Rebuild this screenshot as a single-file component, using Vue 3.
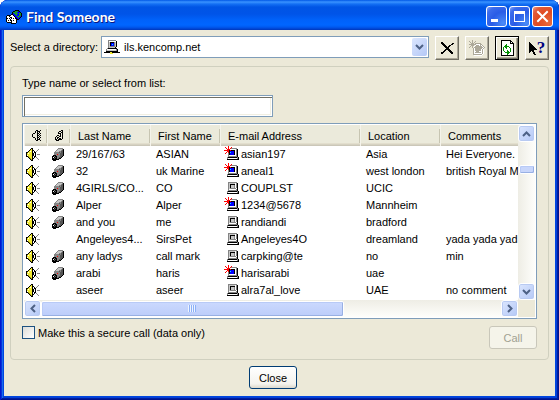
<script setup>
import { ref, h } from 'vue'

const palette = {
  k: '#000000', d: '#555555', g: '#848484', l: '#c6c6c6', w: '#ffffff',
  y: '#f0e830', o: '#a09a10', b: '#0000ff', n: '#000080', c: '#00e8ff',
  r: '#ff0000', e: '#18982c', t: '#e4e0d0', s: '#aca899', i: '#009000'
}

const sprites = {
  speaker: [
    '.....kk.......',
    '....kyk.....g.',
    '...kyykk...g..',
    '..kywykwk.g...',
    'kkyyyykwkk....',
    'kywyyykkwk....',
    'kyyyyykkwk.ggg',
    'kwyyyykkwk....',
    'kkoyyykwkk....',
    '..koyykwk.g...',
    '...koykk...g..',
    '....kok.....g.',
    '.....kk.......'
  ],
  camera: [
    '......ggggg.',
    '.....gllllgk',
    '....gllllgdk',
    '...glllggddk',
    '..gggggdgddk',
    '..ggggggdddk',
    '..gggrggdddk',
    '.kkkggggdddk',
    'kkgkkgggddk.',
    'kwkdkggddk..',
    'kkdkkgdkk...',
    'kkkkkkk.....',
    '.kkk........'
  ],
  speakerLine: [
    '....kk..k',
    '...k.kkk.',
    '...k.k.k.',
    '.kk..kk.k',
    'k....k.k.',
    'k....kk.k',
    'k....k.k.',
    '.kk..kk.k',
    '...k.k.k.',
    '...k.kkk.',
    '....kk..k'
  ],
  cameraLine: [
    '......kk',
    '....kk.k',
    '...k..kk',
    '...kkk.k',
    '.....k.k',
    '..kk.k.k',
    '.k..kk.k',
    'k.kk...k',
    'k.k.kk.k',
    'kk.kkkk.',
    '.kkk....'
  ],
  live: [
    '....r..........',
    '.r..r..r.......',
    '..r.r.rgggggg..',
    '...rrrwwwwwwgk.',
    'rrrrrkrkkkkwgk.',
    '...rrkbbbbkwgk.',
    '..r.rkcbbbkwgk.',
    '.r..gkbbbbkwgk.',
    '....gkbbbbkwgk.',
    '....gwwwwwwwgk.',
    '....gggggggggk.',
    '...gkkkkkkkkkgk',
    '...gwwwwwwwwwgk',
    '...kkkkkkkkkkkk'
  ],
  idle: [
    '...............',
    '...............',
    '....ggggggggg..',
    '....gllllllwgk.',
    '....glkkkkkwgk.',
    '....glklllgwgk.',
    '....glklllgwgk.',
    '....glklllgwgk.',
    '....glggggggwk.',
    '....gwwwwwwwgk.',
    '....gggggggggk.',
    '...gkkkkkkkkkgk',
    '...gwwwwwwwwwgk',
    '...kkkkkkkkkkkk'
  ],
  server: [
    '....gggggggg....',
    '....gwwwwwwwk...',
    '....glkkkkglk...',
    '....glkbbbglk...',
    '....glkbcbglk...',
    '....glkbbbglk...',
    '....glggggglk...',
    '....gllllllk....',
    '...gkkkkkkkkk...',
    '..gwwwwwwwwwgk..',
    '..glllllllllgk..',
    '..kkkkkkkkkkkk..',
    'kkkkkkyykkkkkkkk',
    '......yyy.......'
  ],
  people: [
    '.........kkkk...',
    '.......kkeeenk..',
    '......keeeebbbk.',
    '......kbeeeebeek',
    '.....kkbbeebbeek',
    '.kkkkwwkbbebbeek',
    'kwwkwwwwkbbeeebk',
    'kwwwkkwwwkbbebk.',
    'kkwkwkwkwkkbbk..',
    'kwwwkwwwwwkkk...',
    'kwkwkkwkwwk.....',
    'kwwwwkwwwwk.....',
    '.kkkkkwwwwk.....',
    '.....kkkkk......'
  ],
  remove: [
    'kk...........',
    'kkk........kk',
    '.kkk......kk.',
    '..kkk...kk...',
    '...kkk.kk....',
    '....kkkk.....',
    '.....kkk.....',
    '....kkkkk....',
    '...kk..kkk...',
    '..kk....kkk..',
    'kkk......kkk.',
    'kk........kk.'
  ],
  addDim: [
    '...s............',
    's..s..s.........',
    '.s.s.s..........',
    '..sss.ssssss....',
    'ssssssswwwwss...',
    '..sss.wssswsws..',
    '.s.s.wsssssssws.',
    's..s.sssssssssws',
    '....swsssssssws.',
    '....swsssssswsw.',
    '....swsssssswsw.',
    '....swwssswwwsw.',
    '....swsssssswsw.',
    '....swwwwwwwwsw.',
    '....sssssssssw..',
    '.....wwwwwwww...'
  ],
  refresh: [
    'kkkkkkkkkk...',
    'kwwwwwwwwkk..',
    'kwwwwwwwwkwk.',
    'kwwwwwwwwkkkk',
    'kwwwwiwwwwwwk',
    'kwwwiiwwwwwwk',
    'kwwiiiiiwwwwk',
    'kwiwiiwwiwwwk',
    'kwiwwiwwwiwwk',
    'kwiwwwwwwiwwk',
    'kwiwwwiwwiwwk',
    'kwwiwwiiwiwwk',
    'kwwwiiiiiwwwk',
    'kwwwwwiiwwwwk',
    'kwwwwwiwwwwwk',
    'kkkkkkkkkkkkk'
  ],
  pointer: [
    'k........',
    'kk.......',
    'kkk......',
    'kkkk.....',
    'kkkkk....',
    'kkkkkk...',
    'kkkkkkk..',
    'kkkkkkkk.',
    'kkkkk....',
    'kk.kk....',
    'k...kk...',
    '....kk...',
    '.....kk..'
  ]
}

// Draws a sprite: one path per palette colour, one unit square per cell.
function PixelIcon({ name }) {
  const rows = sprites[name]
  const paths = {}
  rows.forEach((row, y) => {
    ;[...row].forEach((cell, x) => {
      if (cell !== '.') paths[cell] = (paths[cell] || '') + `M${x} ${y}h1v1h-1z`
    })
  })
  const width = rows[0].length
  return h(
    'svg',
    { width, height: rows.length, viewBox: `0 0 ${width} ${rows.length}`, 'shape-rendering': 'crispEdges', 'aria-hidden': 'true' },
    Object.entries(paths).map(([key, d]) => h('path', { d, fill: palette[key] }))
  )
}
PixelIcon.props = ['name']

const directory = ref('ils.kencomp.net')
const query = ref('')
const secure = ref(false)

const people = [
  { cam: true, live: true, last: '29/167/63', first: 'ASIAN', mail: 'asian197', place: 'Asia', note: 'Hei Everyone.' },
  { cam: true, live: true, last: '32', first: 'uk Marine', mail: 'aneal1', place: 'west london', note: 'british Royal Ma' },
  { cam: true, live: false, last: '4GIRLS/CO...', first: 'CO', mail: 'COUPLST', place: 'UCIC', note: '' },
  { cam: true, live: true, last: 'Alper', first: 'Alper', mail: '1234@5678', place: 'Mannheim', note: '' },
  { cam: true, live: false, last: 'and you', first: 'me', mail: 'randiandi', place: 'bradford', note: '' },
  { cam: false, live: false, last: 'Angeleyes4...', first: 'SirsPet', mail: 'Angeleyes4O', place: 'dreamland', note: 'yada yada yad' },
  { cam: true, live: false, last: 'any ladys', first: 'call mark', mail: 'carpking@te', place: 'no', note: 'min' },
  { cam: true, live: true, last: 'arabi', first: 'haris', mail: 'harisarabi', place: 'uae', note: '' },
  { cam: false, live: false, last: 'aseer', first: 'aseer', mail: 'alra7al_love', place: 'UAE', note: 'no comment' },
  { cam: false, live: true, last: '', first: '', mail: '', place: '', note: '' }
]
</script>

<template>
  <div class="window">
    <header class="titlebar">
      <PixelIcon name="people" />
      <h1>Find Someone</h1>
      <button class="caption" aria-label="Minimize">
        <svg width="19" height="19" viewBox="0 0 19 19"><path d="M4 12h7v3H4z" fill="#fff" /></svg>
      </button>
      <button class="caption" aria-label="Maximize">
        <svg width="19" height="19" viewBox="0 0 19 19"><path d="M4 4h11v11H4zM5 7v7h9V7z" fill="#fff" fill-rule="evenodd" /></svg>
      </button>
      <button class="caption exit" aria-label="Close window">
        <svg width="19" height="19" viewBox="0 0 19 19"><path d="M5 5l9 9M14 5l-9 9" stroke="#fff" stroke-width="2" stroke-linecap="square" /></svg>
      </button>
    </header>

    <main class="body">
      <div class="toolbar">
        <label for="directory">Select a directory:</label>
        <div class="combo">
          <PixelIcon name="server" />
          <select id="directory" v-model="directory">
            <option>ils.kencomp.net</option>
          </select>
          <span class="drop">
            <svg width="9" height="6" viewBox="0 0 9 6"><path d="M1 1l3.5 3.5L8 1" class="chevron" /></svg>
          </span>
        </div>
        <button class="tool" aria-label="Delete"><PixelIcon name="remove" /></button>
        <button class="tool" aria-label="Add" disabled><PixelIcon name="addDim" /></button>
        <button class="tool default" aria-label="Refresh"><PixelIcon name="refresh" /></button>
        <button class="tool" aria-label="Help">
          <PixelIcon name="pointer" /><b class="mark">?</b>
        </button>
      </div>

      <section class="group">
        <label for="query">Type name or select from list:</label>
        <input id="query" v-model="query" class="query" type="text" />

        <div class="list">
          <div class="view">
            <table>
              <colgroup>
                <col class="c-icon" /><col class="c-icon" /><col class="c-last" /><col class="c-first" />
                <col class="c-mail" /><col class="c-place" /><col class="c-note" />
              </colgroup>
              <thead>
                <tr>
                  <th aria-label="Audio"><PixelIcon name="speakerLine" /></th>
                  <th aria-label="Video"><PixelIcon name="cameraLine" /></th>
                  <th>Last Name</th>
                  <th>First Name</th>
                  <th>E-mail Address</th>
                  <th>Location</th>
                  <th>Comments</th>
                </tr>
              </thead>
              <tbody>
                <tr v-for="(p, i) in people" :key="i">
                  <td class="audio"><PixelIcon name="speaker" /></td>
                  <td class="video"><PixelIcon v-if="p.cam" name="camera" /></td>
                  <td>{{ p.last }}</td>
                  <td>{{ p.first }}</td>
                  <td class="mail">
                    <div><PixelIcon :name="p.live ? 'live' : 'idle'" />{{ p.mail }}</div>
                  </td>
                  <td>{{ p.place }}</td>
                  <td>{{ p.note }}</td>
                </tr>
              </tbody>
            </table>
          </div>
          <div class="bar vertical">
            <button class="scroll" aria-label="Scroll up">
              <svg width="9" height="6" viewBox="0 0 9 6"><path d="M1 5l3.5-3.5L8 5" class="chevron" /></svg>
            </button>
            <span class="space" />
            <span class="thumb" />
            <span class="rest" />
            <button class="scroll" aria-label="Scroll down">
              <svg width="9" height="6" viewBox="0 0 9 6"><path d="M1 1l3.5 3.5L8 1" class="chevron" /></svg>
            </button>
          </div>
          <div class="bar horizontal">
            <button class="scroll" aria-label="Scroll left">
              <svg width="6" height="9" viewBox="0 0 6 9"><path d="M5 1L1.5 4.5 5 8" class="chevron" /></svg>
            </button>
            <span class="thumb"><i class="grip" /></span>
            <span class="rest" />
            <button class="scroll" aria-label="Scroll right">
              <svg width="6" height="9" viewBox="0 0 6 9"><path d="M1 1l3.5 3.5L1 8" class="chevron" /></svg>
            </button>
          </div>
        </div>

        <div class="options">
          <label class="secure"><input v-model="secure" type="checkbox" />Make this a secure call (data only)</label>
          <button class="push" disabled>Call</button>
        </div>
      </section>

      <footer><button class="push">Close</button></footer>
    </main>
  </div>
</template>

<style>
body { margin: 0; background: #fff; }
</style>

<style scoped>
* { box-sizing: border-box; }
svg { display: block; flex: none; }
button { padding: 0; font: inherit; color: inherit; }

.window {
  display: flex;
  flex-direction: column;
  min-height: 100vh;
  padding: 0 4px 4px;
  overflow: hidden;
  border-radius: 8px 8px 0 0;
  background: #0046e0;
  box-shadow: inset 1px 0 #0019cf, inset -1px -1px #00138c, inset 2px 0 #0831d9, inset -2px -2px #001ea0, inset 3px 0 #166aee, inset -3px -3px #0441d8;
  font: 11px/16px "Liberation Sans", Arial, sans-serif;
  color: #000;
}

.titlebar {
  display: flex;
  align-items: center;
  gap: 2px;
  height: 30px;
  margin: 0 -4px;
  padding: 3px 6px 0;
  background: linear-gradient(#0058e6 0, #3a93ff 2px, #1470f4 4px, #0055e5 7px, #0054e8 14px, #0062fa 20px, #0066ff 25px, #005af0 27px, #0043cf 29px, #0036b8 30px);
}
h1 {
  flex: 1;
  margin: 0 0 0 2px;
  font: bold 14px/18px Lato, "Noto Sans", sans-serif;
  color: #fff;
  text-shadow: 1px 1px #0a1883;
}
.caption {
  width: 21px;
  height: 21px;
  border: 1px solid #fff;
  border-radius: 3px;
  background: radial-gradient(circle at 85% 85%, #4a8cf8, #2a5ce6 50%, #3c6cec 80%, #86a4f6);
}
.exit { background: radial-gradient(circle at 85% 85%, #e86a3c, #e04a20 50%, #e25c3c 80%, #f0a090); }

.body {
  display: flex;
  flex: 1;
  flex-direction: column;
  gap: 6px;
  padding: 6px 6px 7px;
  background: #ece9d8;
}

.toolbar { display: flex; gap: 6px; align-items: flex-start; }
.toolbar label { width: 85px; padding-top: 3px; white-space: nowrap; }
.combo {
  display: flex;
  flex: 1;
  align-items: center;
  height: 22px;
  padding: 1px 1px 1px 2px;
  border: 1px solid #7f9db9;
  background: #fff;
}
select {
  flex: 1;
  min-width: 0;
  padding: 0 0 0 4px;
  border: 0;
  outline: 0;
  appearance: none;
  background: transparent;
  font: inherit;
  color: inherit;
}
.drop {
  display: grid;
  place-items: center;
  width: 15px;
  height: 18px;
  border-radius: 2px;
  background: linear-gradient(135deg, #dbe6fe, #b4c8f6);
}
.chevron { fill: none; stroke: #4d6185; stroke-width: 2; }

.tool {
  display: flex;
  align-items: center;
  justify-content: center;
  width: 24px;
  height: 24px;
  border: 1px solid;
  border-color: #fff #716f64 #716f64 #fff;
  background: #ece9d8;
  box-shadow: inset -1px -1px #aca899;
}
.default { border-color: #000; box-shadow: inset 1px 1px #fff, inset -1px -1px #716f64, inset -2px -2px #aca899; }
.mark { margin-left: -1px; font: bold 17px/16px "Liberation Serif", serif; color: #000080; }

.group {
  display: flex;
  flex: 1;
  flex-direction: column;
  padding: 8px 11px 10px;
  border: 1px solid #d0d0bf;
  border-radius: 4px;
}
.query {
  width: 251px;
  height: 22px;
  margin: 4px 0 6px;
  padding: 2px 4px;
  border: 1px solid #7f9db9;
  outline: 0;
  background: #fff;
  box-shadow: inset 1px 1px #fff, inset 2px 2px #716f64, inset -1px -1px #fff, inset -2px -2px #f1efe2;
  font: inherit;
}

.list {
  display: grid;
  flex: 1;
  grid-template-columns: 1fr 17px;
  grid-template-rows: 1fr 17px;
  min-height: 196px;
  padding: 1px;
  border: 1px solid #7f9db9;
  background: linear-gradient(#ece9d8, #ece9d8) content-box, #fff;
}
.view { height: 0; min-height: 100%; overflow: hidden; background: #fff; }
table { width: 100%; border-collapse: collapse; table-layout: fixed; }
.c-icon { width: 23px; }
.c-last { width: 80px; }
.c-first { width: 70px; }
.c-mail { width: 140px; }
.c-place { width: 80px; }
th {
  height: 21px;
  padding: 0 0 0 8px;
  background: linear-gradient(#c7c5b2, #c7c5b2) right 4px / 1px 14px no-repeat, linear-gradient(#ebeadb 18px, #e2decd 18px, #e2decd 19px, #d6d2c2 19px, #d6d2c2 20px, #cbc7b8 20px);
  box-shadow: inset 1px 0 #f4f3ea;
  font-weight: normal;
  line-height: 16px;
  text-align: left;
  white-space: nowrap;
}
th:last-child { background: linear-gradient(#ebeadb 18px, #e2decd 18px, #e2decd 19px, #d6d2c2 19px, #d6d2c2 20px, #cbc7b8 20px); }
td { height: 17px; padding: 0 0 0 6px; line-height: 17px; white-space: nowrap; }
td.audio { padding-left: 2px; }
td.video { padding-left: 5px; }
td.mail { padding-left: 4px; }
.mail div { display: flex; gap: 2px; align-items: flex-start; }

.bar { display: flex; align-items: center; }
.vertical { flex-direction: column; background: linear-gradient(90deg, #eeede5, #fefefb); }
.horizontal { background: linear-gradient(#eeede5, #fefefb); }
.scroll {
  display: grid;
  place-items: center;
  flex: none;
  width: 17px;
  height: 17px;
  border: 1px solid #fff;
  border-radius: 3px;
  background: linear-gradient(135deg, #dbe6fe, #b4c8f6);
  box-shadow: inset 0 0 0 1px #b8caf2;
}
.thumb {
  display: grid;
  place-items: center;
  border: 1px solid #fff;
  border-radius: 2px;
  background: #c8d6fb;
  box-shadow: inset -1px -1px #98b0e4, inset 1px 1px #b8caf6;
}
.vertical .space { flex: 23; }
.vertical .rest { flex: 110; }
.vertical .thumb { width: 16px; height: 9px; }
.horizontal .thumb { flex: 302; height: 16px; background: linear-gradient(#cbd9fe, #bccdfa); }
.horizontal .rest { flex: 158; }
.grip { width: 8px; height: 7px; background: repeating-linear-gradient(90deg, #eef4fe 0 1px, #8cb0f8 1px 2px); }

.options { display: flex; justify-content: space-between; margin-top: 7px; }
.secure { display: flex; gap: 3px; align-items: center; height: 13px; }
.secure input {
  width: 13px;
  height: 13px;
  margin: 0;
  border: 1px solid #1c5180;
  appearance: none;
  background: linear-gradient(135deg, #dcdcd7, #fff);
}
.secure input:checked { background: #21a121; }
.push {
  width: 48px;
  height: 23px;
  border: 1px solid #003c74;
  border-radius: 3px;
  background: linear-gradient(#fff, #f4f3ee 80%, #dcd8cc);
}
.push:disabled { border-color: #c9c7ba; background: #f5f4ea; color: #a1a192; }
footer { display: flex; justify-content: center; height: 23px; padding-right: 13px; }
</style>
